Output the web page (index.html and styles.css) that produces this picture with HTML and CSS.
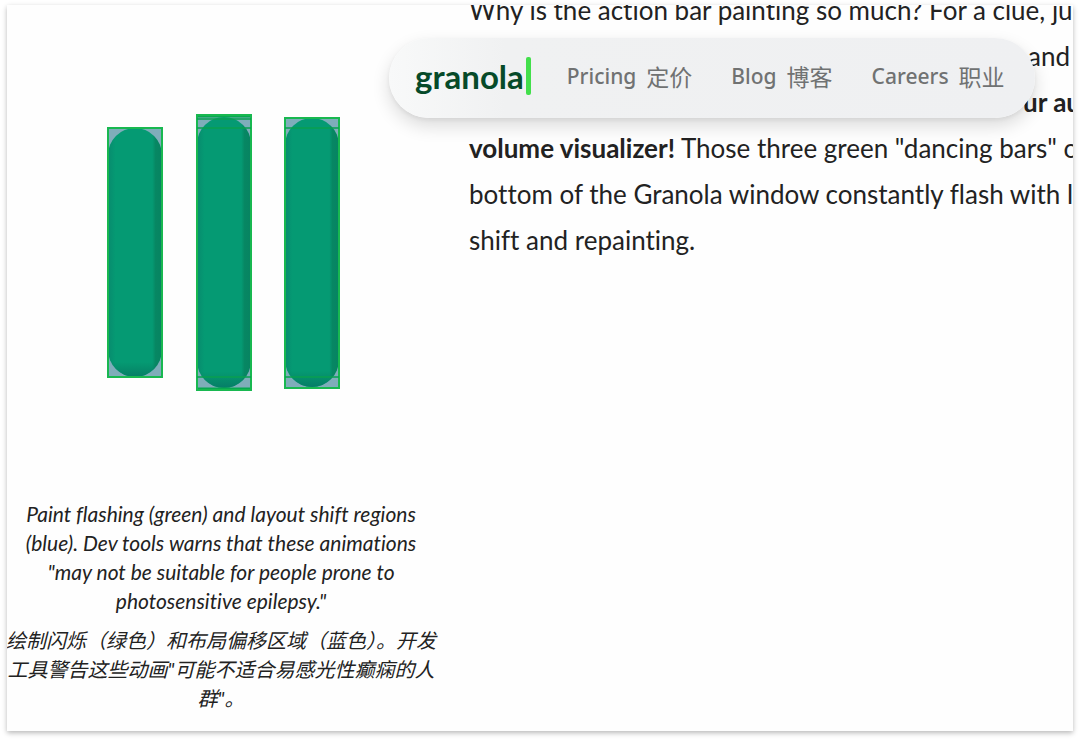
FILE: index.html
```
<!DOCTYPE html>
<html lang="en">
<head>
  <meta charset="utf-8">
  <meta name="viewport" content="width=device-width, initial-scale=1">
  <title>Granola</title>
  <link rel="stylesheet" href="styles.css">
</head>
<body>
<div class="page">
  <header class="navbar">
    <a class="logo" href="#">granola<span class="logo-cursor"></span></a>
    <nav class="nav-links">
      <a href="#">Pricing <span lang="zh-CN">定价</span></a>
      <a href="#">Blog <span lang="zh-CN">博客</span></a>
      <a href="#">Careers <span lang="zh-CN">职业</span></a>
    </nav>
  </header>
  <main class="article">
    <figure class="figure">
      <svg class="bars" viewBox="0 0 440 494" role="img" aria-label="Volume bars">
        <defs>
          <linearGradient id="side" x1="0" x2="1" y1="0" y2="0">
            <stop offset="0" stop-color="#088b6e"/>
            <stop offset="0.14" stop-color="#059a73"/>
            <stop offset="0.82" stop-color="#059a73"/>
            <stop offset="0.88" stop-color="#078763"/>
            <stop offset="1" stop-color="#078361"/>
          </linearGradient>
          <linearGradient id="foot" x1="0" x2="0" y1="0" y2="1">
            <stop offset="0.94" stop-color="#06805f" stop-opacity="0"/>
            <stop offset="1" stop-color="#067c68"/>
          </linearGradient>
        </defs>
        <g>
          <rect x="107" y="123" width="54" height="249" fill="#7fadba"/>
          <rect x="107" y="123" width="54" height="249" rx="27" fill="url(#side)"/>
          <rect x="107" y="123" width="54" height="249" rx="27" fill="url(#foot)"/>
          <rect x="107" y="123" width="54" height="249" fill="none" stroke="#18b850" stroke-width="2"/>
        </g>
        <g>
          <rect x="196" y="110" width="54" height="275" fill="#7fadba"/>
          <rect x="196" y="112" width="54" height="271" rx="27" fill="url(#side)"/>
          <rect x="196" y="112" width="54" height="271" rx="27" fill="url(#foot)"/>
          <path d="M196 111h54M196 384h54" stroke="#08a850" stroke-width="3"/>
          <rect x="196" y="110" width="54" height="275" fill="none" stroke="#18b850" stroke-width="2"/>
          <path d="M196 114h54M196 123h54M196 372h54" stroke="#08a050" stroke-width="1.5"/>
        </g>
        <g>
          <rect x="284" y="113" width="54" height="270" fill="#7fadba"/>
          <rect x="284" y="113" width="54" height="269" rx="27" fill="url(#side)"/>
          <rect x="284" y="113" width="54" height="269" rx="27" fill="url(#foot)"/>
          <rect x="284" y="113" width="54" height="270" fill="none" stroke="#18b850" stroke-width="2"/>
          <path d="M284 123h54M284 372h54" stroke="#08a050" stroke-width="1.5"/>
        </g>
      </svg>
      <figcaption class="caption">
        <p>Paint flashing (green) and layout shift regions<br>(blue). Dev tools warns that these animations<br>"may not be suitable for people prone to<br>photosensitive epilepsy."</p>
        <p lang="zh-CN">绘制闪烁（绿色）和布局偏移区域（蓝色）。开发<br>工具警告这些动画"可能不适合易感光性癫痫的人<br>群"。</p>
      </figcaption>
    </figure>
    <p class="copy">
      Why is the action bar painting so much? For a clue, jum<br>
      <span class="line-end">and</span><br>
      <strong><span class="line-end">ur au</span><br>
      volume visualizer!</strong> Those three green "dancing bars" o<br>
      bottom of the Granola window constantly flash with lo<br>
      shift and repainting.
    </p>
  </main>
</div>
</body>
</html>
```
FILE: styles.css
```
* {
  box-sizing: border-box;
}

body {
  margin: 0;
  padding: 5px 7px 9px;
  background: #fff;
  color: #222;
  font-family: Lato, "Noto Sans CJK SC", sans-serif;
  font-variant-ligatures: none;
}

.page {
  position: relative;
  overflow: hidden;
  padding-bottom: 18px;
  background: #fefefe;
  box-shadow: 0 2px 5px rgba(0, 0, 0, 0.28);
}

.navbar {
  position: absolute;
  z-index: 2;
  top: 33px;
  left: 382px;
  display: flex;
  align-items: center;
  gap: 36px;
  height: 80px;
  padding: 0 30px 4px 26px;
  border-radius: 40px;
  background: linear-gradient(90deg, #f8f9f9 0, #f0f1f2 18%, #eff0f2 100%);
  box-shadow: 0 8px 18px rgba(0, 0, 0, 0.14), 0 2px 4px rgba(0, 0, 0, 0.06);
}

.logo {
  display: flex;
  align-items: center;
  gap: 2px;
  color: #064a29;
  font-size: 33px;
  font-weight: 700;
  line-height: 40px;
  text-decoration: none;
}

.logo-cursor {
  width: 5px;
  height: 38px;
  border-radius: 2px;
  background: #42df4b;
}

.nav-links {
  display: flex;
  gap: 39px;
}

.nav-links a {
  display: flex;
  align-items: center;
  gap: 10px;
  color: #707272;
  font-family: "Noto Sans", "Noto Sans CJK SC", sans-serif;
  font-size: 21px;
  font-weight: 500;
  line-height: 32px;
  text-decoration: none;
}

.nav-links span {
  font-family: "Noto Sans CJK SC", sans-serif;
  font-size: 23px;
  font-weight: 400;
}

.article {
  display: grid;
  grid-template-columns: 440px 1fr;
  column-gap: 28px;
  margin-left: -6px;
}

.figure {
  margin: 0;
}

.bars {
  display: block;
  width: 100%;
}

.caption {
  font-size: 21px;
  font-style: italic;
  line-height: 29px;
  text-align: center;
  white-space: nowrap;
}

.caption p {
  margin: 0 0 11px;
}

.caption p:last-child {
  margin-bottom: 0;
  font-size: 20px;
}

.copy {
  min-width: 0;
  margin: -18px 0 0;
  font-size: 26px;
  line-height: 46px;
  white-space: nowrap;
}

.line-end {
  padding-left: 559px;
}

strong .line-end {
  padding-left: 554px;
}
```
